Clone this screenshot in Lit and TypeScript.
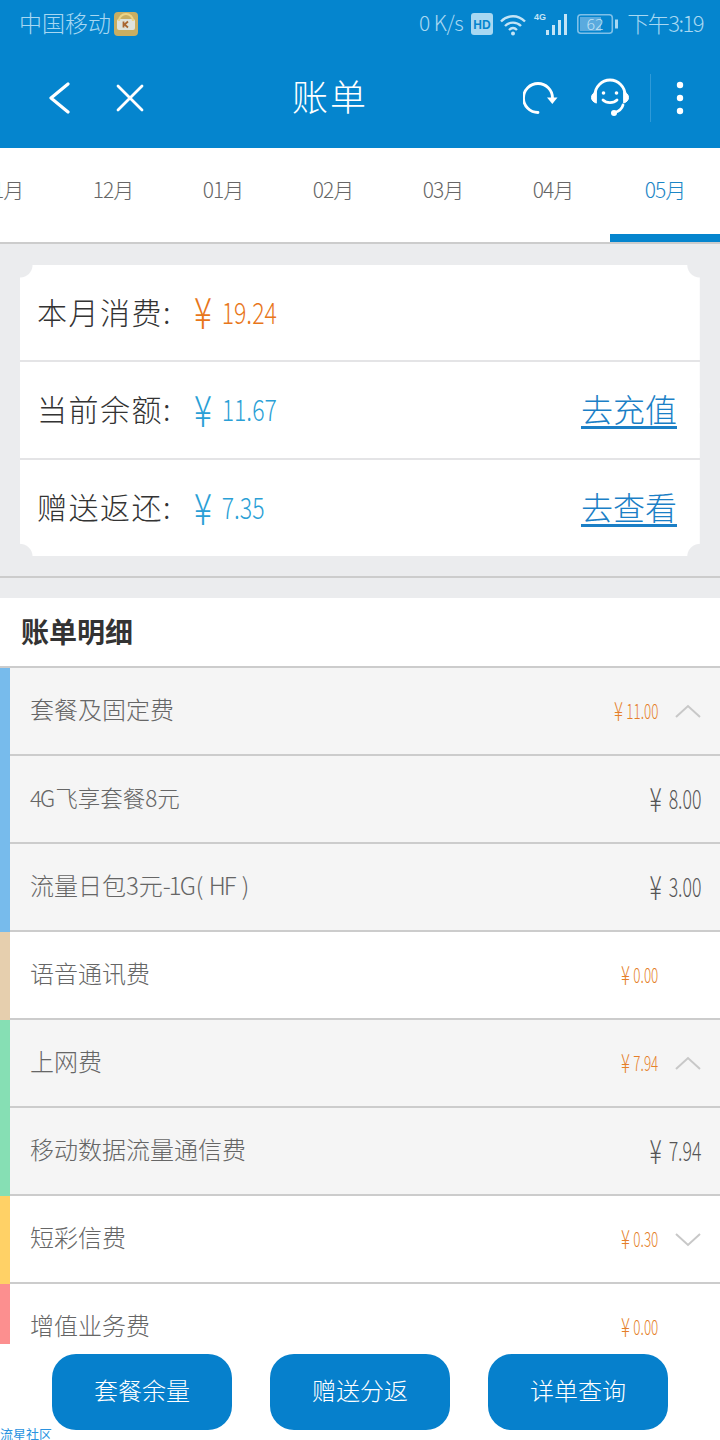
import { LitElement, html, css, nothing } from "lit";
import { customElement } from "lit/decorators.js";

const MONTHS = ["11月", "12月", "01月", "02月", "03月", "04月", "05月"];

const SUMMARY = [
  { label: "本月消费:", amount: "19.24", tone: "orange", link: "" },
  { label: "当前余额:", amount: "11.67", tone: "blue", link: "去充值" },
  { label: "赠送返还:", amount: "7.35", tone: "blue", link: "去查看" },
];

const ROWS = [
  { label: "套餐及固定费", amount: "11.00", color: "#77bbec", kind: "open" },
  { label: html`<span class="mid-label"><span class="tight">4G</span>飞享套餐<span class="tight">8</span>元</span>`, amount: "8.00", color: "#77bbec", kind: "sub" },
  { label: html`流量日包<span class="tight">3</span>元<span class="tight">-1G</span>( <span class="tight">HF</span> )`, amount: "3.00", color: "#77bbec", kind: "sub" },
  { label: "语音通讯费", amount: "0.00", color: "#e6cfae", kind: "flat" },
  { label: "上网费", amount: "7.94", color: "#86dfb4", kind: "open" },
  { label: "移动数据流量通信费", amount: "7.94", color: "#86dfb4", kind: "sub" },
  { label: "短彩信费", amount: "0.30", color: "#ffd166", kind: "closed" },
  { label: "增值业务费", amount: "0.00", color: "#fc8f8f", kind: "flat" },
];

@customElement("app-root")
export class AppRoot extends LitElement {
  static styles = css`
    :host {
      display: flex;
      flex-direction: column;
      position: relative;
      width: 720px;
      height: 1440px;
      overflow: hidden;
      background: #fff;
      font-family: "Noto Sans CJK SC", "Noto Sans", sans-serif;
      font-weight: 300;
    }
    .top {
      background: #0585ce;
      height: 148px;
      flex: none;
    }
    .status {
      height: 48px;
      display: flex;
      align-items: center;
      padding: 0 17px 0 19px;
      color: #a8d8f2;
      font-size: 23px;
    }
    .status .carrier {
      padding-bottom: 5px;
    }
    .k-icon {
      margin-left: 3px;
    }
    .status .right {
      margin-left: auto;
      display: flex;
      align-items: center;
    }
    .speed {
      font-size: 21px;
      margin-right: 8px;
      letter-spacing: -0.5px;
      padding-bottom: 4px;
    }
    .time {
      font-size: 22px;
      margin-left: 8px;
      letter-spacing: -1.5px;
      padding-bottom: 5px;
    }
    .nav {
      height: 100px;
      display: grid;
      grid-template-columns: 292px auto 1fr;
      align-items: center;
    }
    .nav .left {
      display: flex;
      align-items: center;
      padding-left: 48px;
      gap: 43px;
    }
    .nav .title {
      color: #fff;
      font-size: 36px;
      letter-spacing: 2px;
      line-height: 94px;
      height: 100px;
    }
    .nav .actions {
      display: flex;
      align-items: center;
      justify-content: flex-end;
      padding-right: 36px;
    }
    .divider {
      width: 1px;
      height: 48px;
      background: #2f9ad8;
      margin: 0 25px 0 19px;
    }
    .tabs {
      flex: none;
      height: 96px;
      box-sizing: border-box;
      display: flex;
      justify-content: flex-end;
      overflow: hidden;
      border-bottom: 2px solid #cccccc;
      background: #fff;
    }
    .tab {
      flex: none;
      width: 110px;
      text-align: center;
      font-size: 21px;
      line-height: 82px;
      letter-spacing: -1px;
      color: #666;
      box-sizing: border-box;
      height: 94px;
      position: relative;
      left: -2px;
    }
    .tab.active {
      color: #1c86c6;
      left: 0;
      border-bottom: 8px solid #0585ce;
    }
    .overview {
      flex: none;
      background: #ebecee;
      padding-top: 21px;
    }
    .card {
      margin: 0 20px;
      background:
        radial-gradient(circle at 0 0, transparent 12px, #fff 13px) top left / 51% 51% no-repeat,
        radial-gradient(circle at 100% 0, transparent 12px, #fff 13px) top right / 51% 51% no-repeat,
        radial-gradient(circle at 0 100%, transparent 12px, #fff 13px) bottom left / 51% 51% no-repeat,
        radial-gradient(circle at 100% 100%, transparent 12px, #fff 13px) bottom right / 51% 51% no-repeat;
    }
    .sum-row {
      height: 98px;
      box-sizing: border-box;
      display: flex;
      align-items: center;
      padding: 0 23px 4px 17px;
      border-bottom: 2px solid #e4e4e6;
    }
    .sum-row:first-child {
      height: 97px;
    }
    .sum-row:last-child {
      height: 96px;
      border-bottom: none;
    }
    .sum-label {
      width: 157px;
      font-size: 30px;
      letter-spacing: 1.5px;
      color: #333;
      white-space: nowrap;
    }
    .sum-row a {
      margin-left: auto;
      font-size: 32px;
      color: #1b7fc6;
      text-decoration: underline;
      text-underline-offset: 4px;
    }
    .rule {
      height: 2px;
      background: #cccccc;
      margin-top: 20px;
    }
    .gap {
      height: 20px;
    }
    .money {
      display: inline-flex;
      align-items: center;
      white-space: nowrap;
    }
    .money .yen {
      font-size: 1.25em;
      margin-right: 0.2em;
    }
    .money.card-size {
      font-size: 30px;
      transform: scaleX(0.77);
      transform-origin: left center;
    }
    .money.card-size .yen {
      font-size: 1.45em;
      margin-right: 0.29em;
    }
    .money.small {
      font-size: 21px;
      padding-bottom: 2px;
      transform: scaleX(0.64);
      transform-origin: right center;
    }
    .money.sub {
      font-size: 26px;
      padding-bottom: 4px;
      transform: scaleX(0.68);
      transform-origin: right center;
    }
    .money.sub .yen {
      font-size: 1.3em;
      margin-right: 0.3em;
    }
    .orange {
      color: #e8761a;
    }
    .blue {
      color: #2a9fd6;
    }
    .amber {
      color: #e57f2a;
    }
    .slate {
      color: #555;
    }
    .detail-head {
      flex: none;
      height: 70px;
      box-sizing: border-box;
      display: flex;
      align-items: center;
      padding: 0 0 2px 21px;
      font-size: 28px;
      font-weight: 700;
      color: #333;
      border-bottom: 2px solid #cccccc;
    }
    .list {
      flex: 1;
      min-height: 0;
      overflow: hidden;
    }
    .row {
      height: 88px;
      display: flex;
      box-sizing: border-box;
      border-left: 10px solid;
    }
    .row-body {
      flex: 1;
      display: flex;
      align-items: center;
      padding: 0 19px 0 20px;
      border-bottom: 2px solid #cccccc;
      box-sizing: border-box;
      min-width: 0;
    }
    .row.tinted .row-body {
      background: #f5f5f5;
    }
    .row-label {
      font-size: 24px;
      color: #666;
      white-space: nowrap;
      padding-bottom: 5px;
    }
    .mid-label {
      font-size: 22.5px;
    }
    .tight {
      letter-spacing: -2px;
      margin-right: 2px;
    }
    .row-end {
      margin-left: auto;
      display: flex;
      align-items: center;
    }
    .chev {
      width: 26px;
      margin-left: 17px;
      display: flex;
    }
    .bottom {
      flex: none;
      height: 96px;
      box-sizing: border-box;
      padding: 10px 52px 0;
      display: flex;
      justify-content: space-between;
    }
    .bottom button {
      width: 180px;
      height: 76px;
      border: none;
      border-radius: 24px;
      background: #0680cc;
      color: #fff;
      font: inherit;
      font-size: 24px;
      padding: 0 0 5px;
    }
    .mark {
      position: absolute;
      left: 0;
      bottom: -2px;
      font-size: 13px;
      line-height: 16px;
      color: #2a93e0;
      font-weight: 400;
    }
  `;

  money(amount: string, size: string, tone: string) {
    return html`<span class="money ${size} ${tone}"><span class="yen">¥</span>${amount}</span>`;
  }

  statusBar() {
    return html`
      <div class="status">
        <span class="carrier">中国移动</span>
        <svg class="k-icon" width="24" height="24" viewBox="0 0 24 24">
          <rect width="24" height="24" rx="4" fill="#c9ae62" />
          <rect x="3" y="7" width="18" height="11" rx="2" fill="#dfe3dc" />
          <path d="M5 9a7 7 0 0 1 14 0" fill="none" stroke="#ecd488" stroke-width="2" />
          <path d="M9.5 9.5v6M14 9.5l-3.5 3 3.500 3" fill="none" stroke="#a8652f" stroke-width="1.800" />
        </svg>
        <div class="right">
          <span class="speed">0 K/s</span>
          <svg width="22" height="22" viewBox="0 0 22 22">
            <rect width="22" height="22" rx="3" fill="#a8d8f2" />
            <text x="11" y="15.5" text-anchor="middle" font-size="12" font-weight="700" font-family="Liberation Sans" fill="#0585ce">HD</text>
          </svg>
          <svg style="margin-left:7px" width="27" height="24" viewBox="0 0 27 24" fill="none" stroke="#c4e4f6" stroke-width="2.400">
            <path d="M1 9.500c7-7 17-7 24 0" />
            <path d="M5 14c4.500-4.500 11.500-4.500 16 0" />
            <path d="M9 18c2.500-2.400 5.500-2.400 8 0" />
            <circle cx="13" cy="21.500" r="2" fill="#c4e4f6" stroke="none" />
          </svg>
          <svg style="margin-left:6px" width="36" height="24" viewBox="0 0 36 24" fill="#c4e4f6">
            <text x="1" y="8" font-size="9" font-weight="700" font-family="Liberation Sans">4G</text>
            <rect x="13" y="18" width="3" height="5" />
            <rect x="19" y="13" width="3" height="10" />
            <rect x="25" y="8" width="3" height="15" />
            <rect x="31" y="2" width="3" height="21" />
          </svg>
          <svg style="margin-left:8px" width="42" height="22" viewBox="0 0 42 22">
            <rect x="0.800" y="1.800" width="34.500" height="18.500" rx="3" fill="none" stroke="#7fc0e8" stroke-width="1.600" />
            <rect x="3" y="4" width="21" height="14" fill="#5aaade" />
            <rect x="38" y="6.500" width="3" height="9" fill="#a8d8f2" />
            <text x="18" y="16.500" text-anchor="middle" font-size="15" font-family="Noto Sans" fill="#c4e4f6">62</text>
          </svg>
          <span class="time">下午3:19</span>
        </div>
      </div>
    `;
  }

  navBar() {
    return html`
      <div class="nav">
        <div class="left">
          <svg width="24" height="32" viewBox="0 0 24 32" fill="none" stroke="#fff" stroke-width="3.200" stroke-linecap="round" stroke-linejoin="round">
            <path d="M20 2 3 16l17 14" />
          </svg>
          <svg width="30" height="30" viewBox="0 0 30 30" fill="none" stroke="#fff" stroke-width="2.800" stroke-linecap="round">
            <path d="M3 3l24 24M27 3 3 27" />
          </svg>
        </div>
        <div class="title">账单</div>
        <div class="actions">
          <svg width="36" height="34" viewBox="0 0 36 34" fill="none" stroke="#fff" stroke-width="2.800" stroke-linecap="round">
            <path d="M29.500 17A14.500 14.500 0 1 0 15 31.500" />
            <path d="M24 16.500h10.500L29.300 23z" fill="#fff" stroke="none" />
          </svg>
          <svg style="margin-left:30px" width="42" height="40" viewBox="0 0 42 40" fill="none" stroke="#fff" stroke-width="2.800" stroke-linecap="round">
            <path d="M6 22V17a15 15 0 0 1 30 0v5" />
            <path d="M7 13.500C4 15 2.500 17 2.500 19.500S4 24 7 25z" fill="#fff" stroke-width="1" />
            <path d="M35 13.500c3 1.500 4.500 3.500 4.500 6S38 24 35 25z" fill="#fff" stroke-width="1" />
            <path d="M14 22c3.500 3.500 10.500 3.500 14 0" />
            <path d="M34 27c-1 4-5 6.500-8.500 7.500" />
            <circle cx="14.500" cy="15" r="1.800" fill="#fff" stroke="none" />
            <circle cx="27.500" cy="15" r="1.800" fill="#fff" stroke="none" />
            <circle cx="25" cy="35" r="3" fill="#fff" stroke="none" />
          </svg>
          <span class="divider"></span>
          <svg width="8" height="34" viewBox="0 0 8 34" fill="#fff">
            <circle cx="4" cy="4" r="3.200" />
            <circle cx="4" cy="17" r="3.200" />
            <circle cx="4" cy="30" r="3.200" />
          </svg>
        </div>
      </div>
    `;
  }

  chevron(kind: string) {
    if (kind === "sub") return nothing;
    const d = kind === "open" ? "M1 13 13 2l12 11" : kind === "closed" ? "M1 2l12 11L25 2" : "";
    return html`<span class="chev">
      ${d
        ? html`<svg width="26" height="15" viewBox="0 0 26 15" fill="none" stroke="#c8c8c8" stroke-width="2"><path d="${d}" /></svg>`
        : nothing}
    </span>`;
  }

  render() {
    return html`
      <div class="top">${this.statusBar()} ${this.navBar()}</div>
      <div class="tabs">
        ${MONTHS.map((m, i) => html`<div class="tab ${i === MONTHS.length - 1 ? "active" : ""}">${m}</div>`)}
      </div>
      <div class="overview">
        <div class="card">
          ${SUMMARY.map(
            (s) => html`
              <div class="sum-row">
                <span class="sum-label">${s.label}</span>
                ${this.money(s.amount, "card-size", s.tone)}
                ${s.link ? html`<a>${s.link}</a>` : nothing}
              </div>
            `,
          )}
        </div>
        <div class="rule"></div>
        <div class="gap"></div>
      </div>
      <div class="detail-head">账单明细</div>
      <div class="list">
        ${ROWS.map(
          (r) => html`
            <div class="row ${r.kind === "open" || r.kind === "sub" ? "tinted" : ""}" style="border-left-color:${r.color}">
              <div class="row-body">
                <span class="row-label">${r.label}</span>
                <span class="row-end">
                  ${r.kind === "sub"
                    ? this.money(r.amount, "sub", "slate")
                    : this.money(r.amount, "small", "amber")}
                  ${this.chevron(r.kind)}
                </span>
              </div>
            </div>
          `,
        )}
      </div>
      <div class="bottom">
        <button>套餐余量</button>
        <button>赠送分返</button>
        <button>详单查询</button>
      </div>
      <div class="mark">流星社区</div>
    `;
  }
}
